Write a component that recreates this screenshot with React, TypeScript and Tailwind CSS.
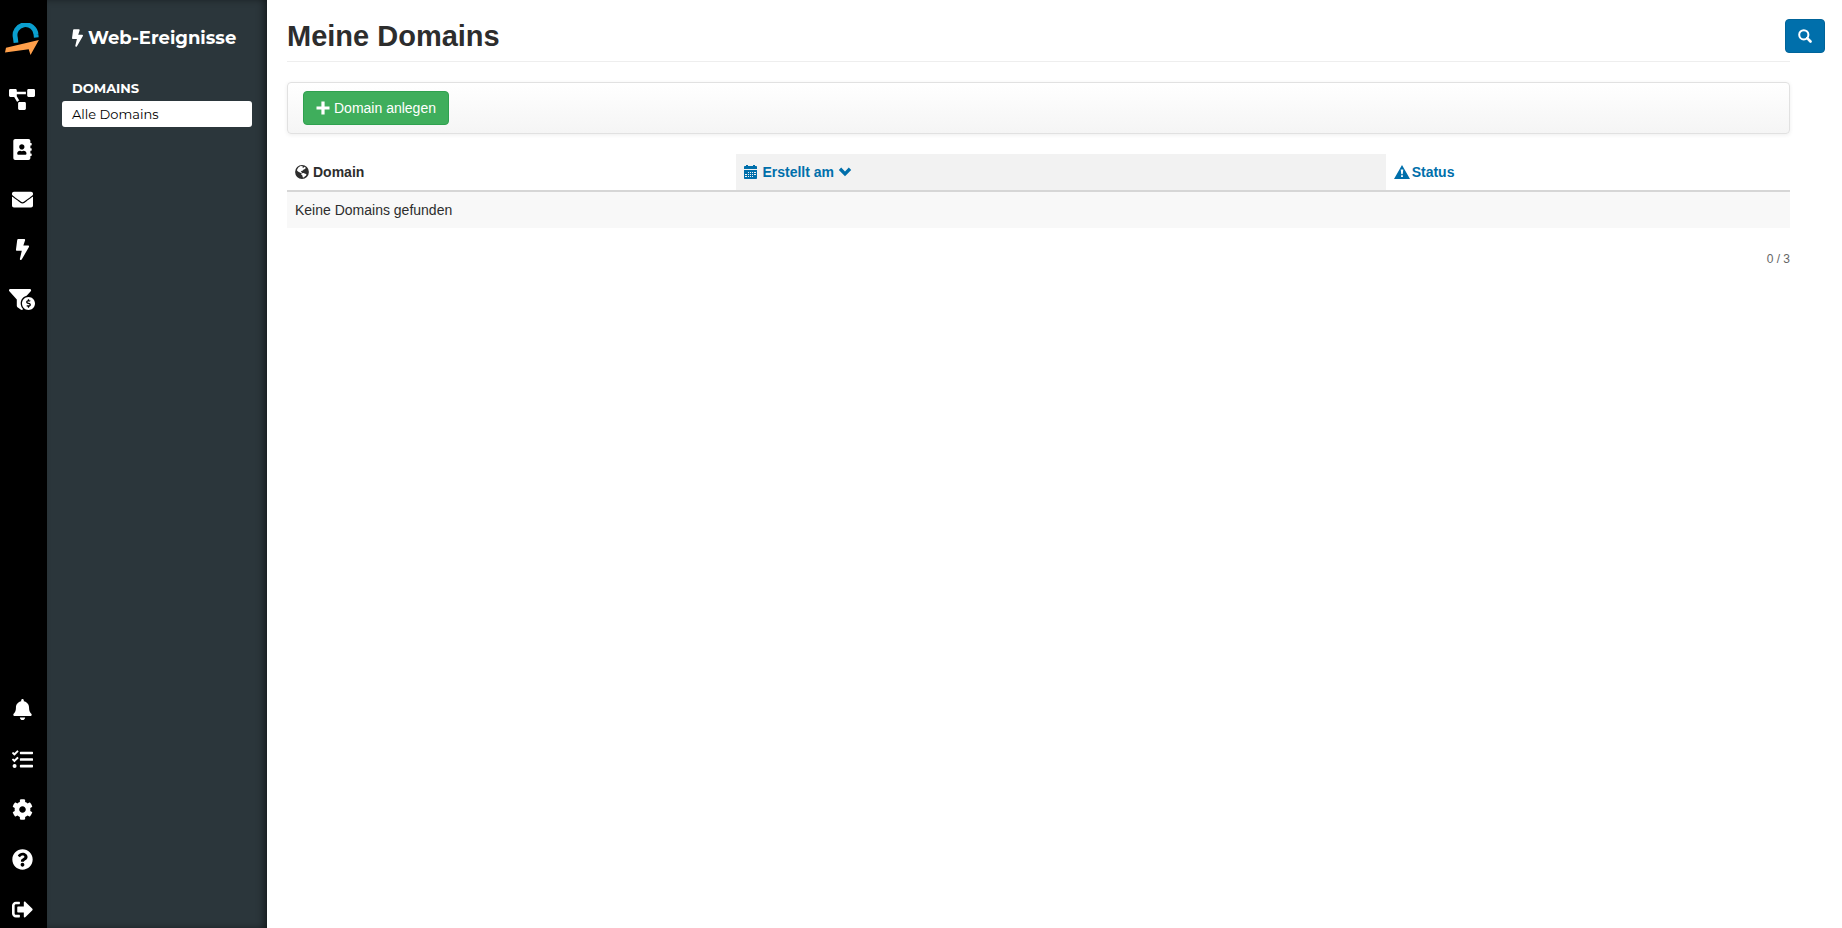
import type { ReactNode } from 'react'
import {
  FaAddressBook,
  FaBell,
  FaBolt,
  FaCog,
  FaEnvelope,
  FaFunnelDollar,
  FaProjectDiagram,
  FaQuestionCircle,
  FaSignOutAlt,
  FaTasks,
} from 'react-icons/fa'

const mainNav = [
  { label: 'Kampagnen', icon: FaProjectDiagram, size: 'h-[21px] w-[26px]' },
  { label: 'Kontakte', icon: FaAddressBook, size: 'size-[21px]' },
  { label: 'E-Mails', icon: FaEnvelope, size: 'size-[21px]' },
  { label: 'Web-Ereignisse', icon: FaBolt, size: 'size-[21px]' },
  { label: 'Funnel', icon: FaFunnelDollar, size: 'h-[21px] w-[26px]' },
]

const footerNav = [
  { label: 'Benachrichtigungen', icon: FaBell, size: 'size-[21px]' },
  { label: 'Aufgaben', icon: FaTasks, size: 'size-[21px]' },
  { label: 'Einstellungen', icon: FaCog, size: 'size-[21px]' },
  { label: 'Hilfe', icon: FaQuestionCircle, size: 'size-[21px]' },
  { label: 'Abmelden', icon: FaSignOutAlt, size: 'size-[21px]' },
]

function Glyph({ children }: { children: ReactNode }) {
  return (
    <svg viewBox="0 0 14 14" fill="currentColor" className="size-[14px] shrink-0" aria-hidden="true">
      {children}
    </svg>
  )
}

function PlusIcon() {
  return (
    <Glyph>
      <path d="M5.4 .5h3.2v4.9h4.9v3.2H8.6v4.9H5.4V8.6H.5V5.4h4.9z" />
    </Glyph>
  )
}

function GlobeIcon() {
  return (
    <Glyph>
      <path
        fillRule="evenodd"
        d="M7 .1a6.9 6.9 0 1 0 0 13.8A6.9 6.9 0 0 0 7 .1zM3.6 2.2l2-1.1 2.3.1-.7 1.1 1.4.4.9-.9 1.3 1-.7 1.2-1.5.5-.7 1-1.5.4-.5 1 1.1.4-.6.9-1.5-.7-1.5-.7-1.3-1.1.1-1.5zM6.6 8.2l2.2-.2 1.2.8 1.4.2-.3 1.5-1.4 1-.8 1-1.2-.3-.3-1.7-1.2-.9z"
      />
    </Glyph>
  )
}

function CalendarIcon() {
  return (
    <Glyph>
      <path d="M0 4V2c0-.6.4-1 1-1h1V0h2v1h5V0h2v1h1c.6 0 1 .4 1 1v2z" />
      <path
        fillRule="evenodd"
        d="M0 5h13v8c0 .6-.4 1-1 1H1c-.6 0-1-.4-1-1zM4 7v1h1V7zm2 0v1h1V7zm2 0v1h1V7zm2 0v1h2V7zM1 9v1h2V9zm3 0v1h1V9zm2 0v1h1V9zm2 0v1h1V9zm2 0v1h2V9zM1 11v1h2v-1zm3 0v1h1v-1zm2 0v1h1v-1zm2 0v1h1v-1z"
      />
    </Glyph>
  )
}

function ChevronIcon() {
  return (
    <Glyph>
      <path d="M7 11.2.8 5l2.4-2.4L7 6.4l3.8-3.8L13.2 5z" />
    </Glyph>
  )
}

function WarningIcon() {
  return (
    <svg viewBox="0 0 16 14" fill="currentColor" className="h-[14px] w-4 shrink-0" aria-hidden="true">
      <path fillRule="evenodd" d="M8 0l8 14H0zM6.7 4.6l.6 4.6h1.4l.6-4.6zM7.1 10.2v1.9h1.8v-1.9z" />
    </svg>
  )
}

function SearchIcon() {
  return (
    <Glyph>
      <circle cx="5.8" cy="5.8" r="4.6" fill="none" stroke="currentColor" strokeWidth="2" />
      <path d="M9.2 9.2l3.3 3.3" stroke="currentColor" strokeWidth="2.6" strokeLinecap="round" />
    </Glyph>
  )
}

function Logo() {
  return (
    <svg viewBox="0 0 34 32" className="h-8 w-[34px] shrink-0" aria-hidden="true">
      <path
        d="M11 19.7 10.4 15A10.5 10.5 0 1 1 31 11.5L31.3 14.6"
        fill="none"
        stroke="#0a9fcf"
        strokeWidth="4.8"
      />
      <path d="M1 24.7 33.9 17 25.5 32 23.7 26.3 0 29.5z" fill="#ff9f4a" />
    </svg>
  )
}

function RailNav({ items, label }: { items: typeof mainNav; label: string }) {
  return (
    <nav aria-label={label} className="flex flex-col gap-3">
      {items.map(({ label, icon: Icon, size }) => (
        <a key={label} href="#" aria-label={label} className="flex h-[38px] items-center justify-center text-white">
          <Icon className={`shrink-0 ${size}`} />
        </a>
      ))}
    </nav>
  )
}

export default function App() {
  return (
    <div className="flex min-h-screen bg-white font-['Helvetica_Neue','Liberation_Sans',Arial,sans-serif] text-sm text-[#2d2d2d]">
      <aside className="flex w-[47px] shrink-0 flex-col justify-between bg-black pr-[3px]">
        <div>
          <a href="#" aria-label="Startseite" className="flex h-20 items-start justify-center pt-[23px]">
            <Logo />
          </a>
          <RailNav items={mainNav} label="Hauptmenü" />
        </div>
        <RailNav items={footerNav} label="Konto" />
      </aside>

      <aside className="w-[220px] shrink-0 bg-[#2b363b] px-[15px] font-[Montserrat,Inter,sans-serif] shadow-[inset_-4px_0_8px_-2px_rgba(0,0,0,0.6)]">
        <h2 className="flex h-[76px] items-center gap-[5px] px-[10px] text-lg font-bold whitespace-nowrap text-white">
          <FaBolt className="h-[18px] w-[11px] shrink-0" />
          Web-Ereignisse
        </h2>
        <h3 className="flex h-[25px] items-center px-[10px] text-[13px] font-bold text-white">DOMAINS</h3>
        <a href="#" className="flex h-[26px] items-center rounded-[3px] bg-white px-[10px] text-[13px] text-black">
          Alle Domains
        </a>
      </aside>

      <main className="relative min-w-0 flex-1 pr-[52px] pl-5">
        <h1 className="flex h-[62px] items-center border-b border-[#eeeeee] pt-3 text-[29px] font-bold">
          Meine Domains
        </h1>
        <button
          type="button"
          aria-label="Suchen"
          className="absolute top-[19px] right-[17px] flex h-[34px] w-10 items-center justify-center rounded border border-[#00649a] bg-[#006fab] text-white"
        >
          <SearchIcon />
        </button>

        <div className="mt-5 flex rounded border border-[#e1e1e1] bg-linear-to-b from-white to-[#f5f5f5] px-[15px] py-2 shadow-[0_1px_4px_rgba(0,0,0,0.07)]">
          <button
            type="button"
            className="flex h-[34px] items-center gap-1 rounded border border-[#2fa14f] bg-[#3fae5c] px-3 text-white"
          >
            <PlusIcon />
            Domain anlegen
          </button>
        </div>

        <table className="mt-5 w-full table-fixed border-collapse text-left">
          <colgroup>
            <col className="w-[29.9%]" />
            <col className="w-[43.2%]" />
            <col />
          </colgroup>
          <thead>
            <tr className="h-[37px] border-b-2 border-[#d6d6d6]">
              <th scope="col" className="px-2 font-bold">
                <span className="flex items-center gap-1">
                  <GlobeIcon />
                  Domain
                </span>
              </th>
              <th scope="col" className="bg-[#f2f2f2] px-2 font-bold">
                <a href="#" className="flex items-center gap-1 text-[#006fab]">
                  <CalendarIcon />
                  Erstellt am
                  <ChevronIcon />
                </a>
              </th>
              <th scope="col" className="px-2 font-bold">
                <a href="#" className="flex items-center gap-[2px] text-[#006fab]">
                  <WarningIcon />
                  Status
                </a>
              </th>
            </tr>
          </thead>
          <tbody>
            <tr className="h-[37px] bg-[#f8f8f8]">
              <td colSpan={3} className="px-2">
                Keine Domains gefunden
              </td>
            </tr>
          </tbody>
        </table>
        <p className="mt-[22px] text-right text-xs leading-[18px] text-[#666666]">0 / 3</p>
      </main>
    </div>
  )
}
